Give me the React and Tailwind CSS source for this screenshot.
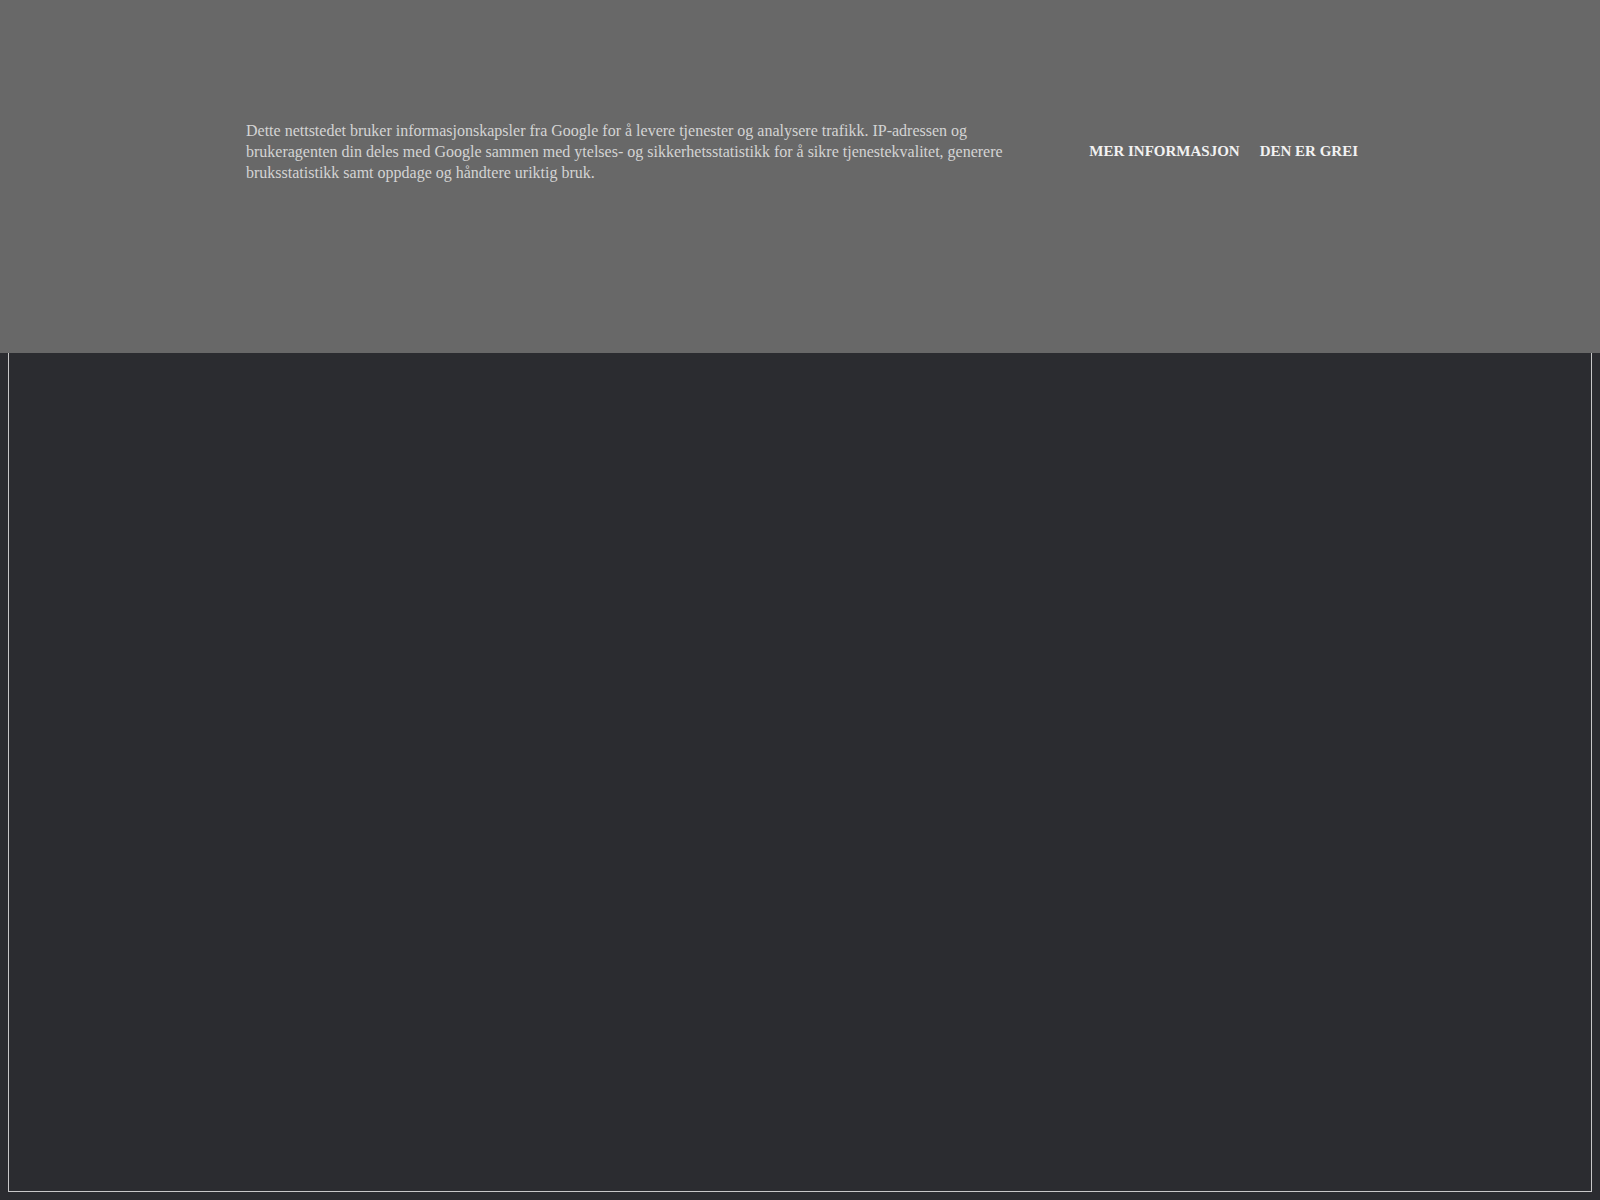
import React from "react";

const App = () => {
  return (
    <div className="relative h-[1200px] bg-[#2b2c30] p-2 font-['Liberation_Serif',serif]">
      {/* page frame behind the cookie bar */}
      <div className="h-full border border-[#c8c8c8]" />

      {/* cookie notice */}
      <div className="absolute inset-x-0 top-0 h-[353px] bg-[#686868] pt-[120px]">
        <div className="mx-auto flex w-[1112px] items-center justify-between">
          <p className="ml-[2px] w-[790px] text-[16px] leading-[21px] text-[#d4d4d4]">
            Dette nettstedet bruker informasjonskapsler fra Google for å levere
            tjenester og analysere trafikk. IP-adressen og brukeragenten din
            deles med Google sammen med ytelses- og sikkerhetsstatistikk for å
            sikre tjenestekvalitet, generere bruksstatistikk samt oppdage og
            håndtere uriktig bruk.
          </p>
          <div className="mr-[-2px] flex items-center gap-[20px] text-[15px] font-bold text-[#f2f2f2]">
            <a href="#" className="uppercase">
              Mer informasjon
            </a>
            <a href="#" className="uppercase">
              Den er grei
            </a>
          </div>
        </div>
      </div>
    </div>
  );
};

export default App;
